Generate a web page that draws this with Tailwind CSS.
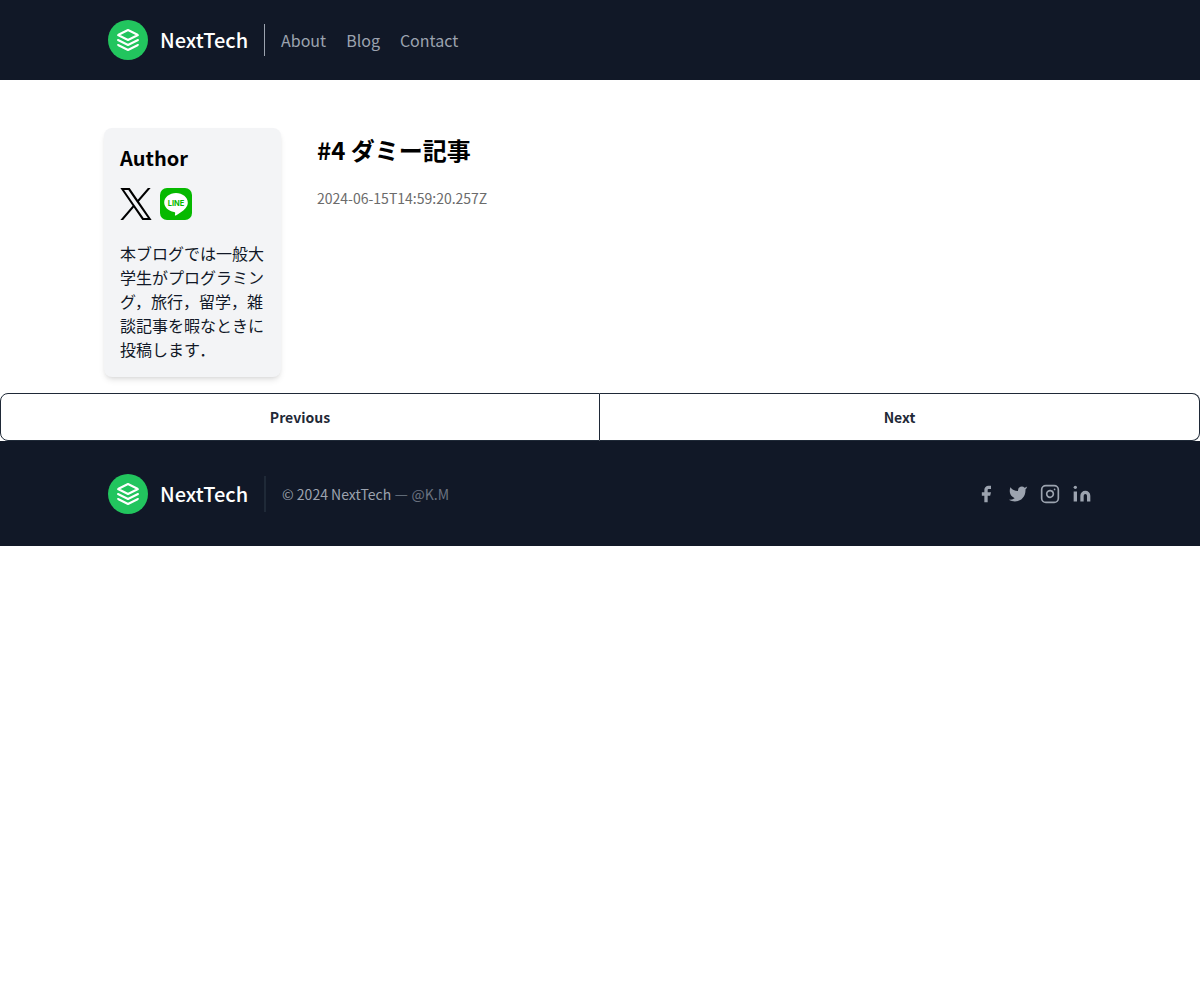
<!DOCTYPE html>
<html lang="ja">
<head>
    <meta charset="UTF-8">
    <meta name="viewport" content="width=device-width, initial-scale=1.0">
    <script src="https://cdn.jsdelivr.net/npm/@tailwindcss/browser@4"></script>
    <title>NextTech</title>
</head>
<body class="bg-white text-black font-['Noto_Sans_CJK_JP',sans-serif]">
    <header class="bg-[#111827]">
        <div class="max-w-5xl mx-auto flex items-center p-5">
            <a href="#" class="flex items-center font-medium text-white">
                <svg class="w-10 h-10 p-2 rounded-full bg-[#22c55e]" viewBox="0 0 24 24" fill="none" stroke="currentColor" stroke-linecap="round" stroke-linejoin="round" stroke-width="2">
                    <path d="M12 2L2 7l10 5 10-5-10-5zM2 17l10 5 10-5M2 12l10 5 10-5"/>
                </svg>
                <span class="ml-3 text-xl">NextTech</span>
            </a>
            <nav class="ml-4 pl-4 py-1 border-l border-[#9ca3af] flex items-center gap-5 text-base text-[#9ca3af]">
                <a href="#">About</a>
                <a href="#">Blog</a>
                <a href="#">Contact</a>
            </nav>
        </div>
    </header>

    <main>
        <div class="max-w-5xl mx-auto flex items-start px-4 pt-12 pb-4">
            <aside class="w-[177px] shrink-0 rounded-lg bg-[#f3f4f6] p-4 shadow-md">
                <h2 class="text-xl font-bold">Author</h2>
                <div class="mt-4 flex gap-2">
                    <a href="#" aria-label="X">
                        <svg class="w-8 h-8" viewBox="0 0 1200 1227" fill="#000">
                            <path d="M714.163 519.284L1160.89 0H1055.03L667.137 450.887L357.328 0H0L468.492 681.821L0 1226.37H105.866L515.491 750.218L842.672 1226.37H1200L714.137 519.284H714.163ZM569.165 687.828L521.697 619.934L144.011 79.6944H306.615L611.412 515.685L658.88 583.579L1055.08 1150.3H892.476L569.165 687.854V687.828Z"/>
                        </svg>
                    </a>
                    <a href="#" aria-label="LINE">
                        <svg class="w-8 h-8" viewBox="0 0 32 32">
                            <rect width="32" height="32" rx="7" fill="#06b900"/>
                            <path fill="#fff" d="M16 5C9.500 5 4.200 9.300 4.200 14.500c0 4.700 4.200 8.600 9.800 9.400 1.200.2 1.300.7 1.100 1.800l-.2 1.200c0 .5.200.9 1 .5 3-1.500 7-4.300 9.600-7.200 1.600-1.800 2.300-3.600 2.300-5.700C27.800 9.300 22.500 5 16 5z"/>
                            <text x="16" y="17.500" text-anchor="middle" font-family="Inter, sans-serif" font-size="7.500" font-weight="700" fill="#06b900">LINE</text>
                        </svg>
                    </a>
                </div>
                <p class="mt-[21px] text-base text-[#111827]">本ブログでは一般大学生がプログラミング，旅行，留学，雑談記事を暇なときに投稿します．</p>
            </aside>
            <article class="ml-5 flex-1 px-4 pt-[6px]">
                <h1 class="text-2xl font-bold">#4 ダミー記事</h1>
                <time class="mt-[22px] block text-sm text-[#6b6b6b]" datetime="2024-06-15T14:59:20.257Z">2024-06-15T14:59:20.257Z</time>
            </article>
        </div>

        <div class="grid grid-cols-2 h-12 text-sm font-bold text-[#1f2937]">
            <button class="rounded-l-lg border border-[#1f2937]">Previous</button>
            <button class="rounded-r-lg border border-l-0 border-[#1f2937]">Next</button>
        </div>
    </main>

    <footer class="bg-[#111827] border-t border-[#111827]">
        <div class="max-w-5xl mx-auto flex items-center px-5 py-8">
            <a href="#" class="flex items-center font-medium text-white">
                <svg class="w-10 h-10 p-2 rounded-full bg-[#22c55e]" viewBox="0 0 24 24" fill="none" stroke="currentColor" stroke-linecap="round" stroke-linejoin="round" stroke-width="2">
                    <path d="M12 2L2 7l10 5 10-5-10-5zM2 17l10 5 10-5M2 12l10 5 10-5"/>
                </svg>
                <span class="ml-3 text-xl">NextTech</span>
            </a>
            <p class="ml-4 pl-4 py-2 border-l-2 border-[#1f2937] text-sm text-[#9ca3af]">© 2024 NextTech —
                <a href="#" class="text-[#6b7280]">@K.M</a>
            </p>
            <div class="ml-auto flex gap-3 text-[#9ca3af]">
                <a href="#" aria-label="Facebook">
                    <svg class="w-5 h-5" viewBox="0 0 24 24" fill="currentColor">
                        <path d="M18 2h-3a5 5 0 00-5 5v3H7v4h3v8h4v-8h3l1-4h-4V7a1 1 0 011-1h3z"/>
                    </svg>
                </a>
                <a href="#" aria-label="Twitter">
                    <svg class="w-5 h-5" viewBox="0 0 24 24" fill="currentColor">
                        <path d="M23 3a10.900 10.900 0 01-3.140 1.530 4.480 4.480 0 00-7.860 3v1A10.660 10.660 0 013 4s-4 9 5 13a11.640 11.640 0 01-7 2c9 5 20 0 20-11.500a4.500 4.500 0 00-.080-.830A7.720 7.720 0 0023 3z"/>
                    </svg>
                </a>
                <a href="#" aria-label="Instagram">
                    <svg class="w-5 h-5" viewBox="0 0 24 24" fill="none" stroke="currentColor" stroke-linecap="round" stroke-linejoin="round" stroke-width="2">
                        <rect width="20" height="20" x="2" y="2" rx="5"/>
                        <path d="M16 11.370A4 4 0 1112.630 8 4 4 0 0116 11.370zm1.500-4.870h.01"/>
                    </svg>
                </a>
                <a href="#" aria-label="LinkedIn">
                    <svg class="w-5 h-5" viewBox="0 0 24 24" fill="currentColor">
                        <path d="M16 8a6 6 0 016 6v7h-4v-7a2 2 0 00-2-2 2 2 0 00-2 2v7h-4v-7a6 6 0 016-6zM2 9h4v12H2z"/>
                        <circle cx="4" cy="4" r="2"/>
                    </svg>
                </a>
            </div>
        </div>
    </footer>
</body>
</html>
